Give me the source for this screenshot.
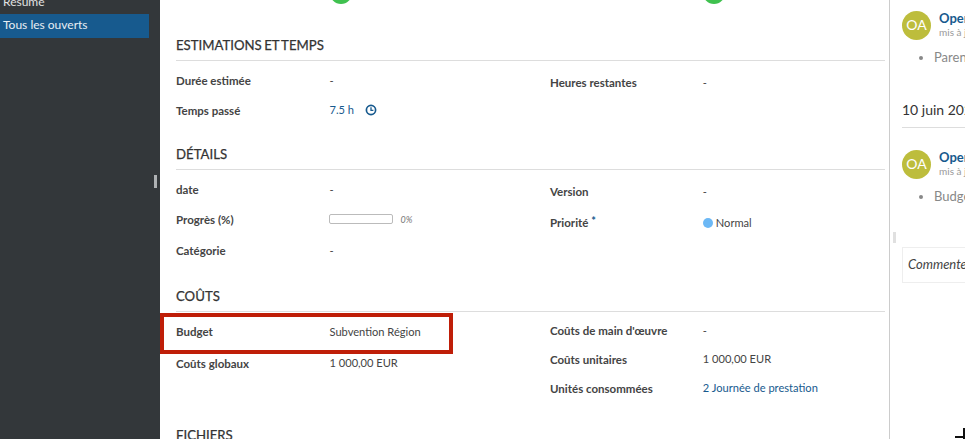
<div class="page">
  <aside class="sidebar">
    <div class="menu">
      <div class="item">Résumé</div>
      <div class="item active">Tous les ouverts</div>
    </div>
    <span class="grip"></span>
  </aside>

  <main class="content">
    <div class="scroll">
      <div class="dots">
        <div class="dotcell"><span class="dot"></span></div>
        <div class="dotcell"><span class="dot"></span></div>
      </div>

      <section class="sec first">
        <h2>ESTIMATIONS ET TEMPS</h2>
        <div class="cols">
          <div class="col">
            <div class="row h30"><b>Durée estimée</b><span>-</span></div>
            <div class="row h30"><b>Temps passé</b><span class="link up">7.5 h
              <svg class="clock" viewBox="0 0 12 12" width="12" height="12"><circle cx="6" cy="6" r="4.6" fill="none" stroke="#175a8e" stroke-width="1.7"/><path d="M6 3.2V6.4H8.4" fill="none" stroke="#175a8e" stroke-width="1.3"/></svg>
            </span></div>
          </div>
          <div class="col offset">
            <div class="row h30"><b>Heures restantes</b><span>-</span></div>
          </div>
        </div>
      </section>

      <section class="sec m18">
        <h2>DÉTAILS</h2>
        <div class="cols">
          <div class="col">
            <div class="row h30"><b>date</b><span>-</span></div>
            <div class="row h30"><b>Progrès (%)</b><span class="prog"><span class="bar"></span><i>0%</i></span></div>
            <div class="row h30 last-row"><b>Catégorie</b><span>-</span></div>
          </div>
          <div class="col offset">
            <div class="row h30"><b>Version</b><span>-</span></div>
            <div class="row h30"><b>Priorité <em>*</em></b><span class="prio"><span class="pdot"></span>Normal</span></div>
          </div>
        </div>
      </section>

      <section class="sec m20">
        <h2>COÛTS</h2>
        <div class="cols">
          <div class="col">
            <div class="row h30 budget"><b>Budget</b><span>Subvention Région</span><span class="mark"></span></div>
            <div class="row h30"><b>Coûts globaux</b><span class="up">1 000,00 EUR</span></div>
          </div>
          <div class="col">
            <div class="row h29"><b>Coûts de main d'œuvre</b><span>-</span></div>
            <div class="row h29"><b>Coûts unitaires</b><span class="up">1 000,00 EUR</span></div>
            <div class="row h29"><b>Unités consommées</b><span class="link up">2 Journée de prestation</span></div>
          </div>
        </div>
      </section>

      <section class="sec m21">
        <h2>FICHIERS</h2>
      </section>
    </div>
  </main>

  <aside class="activity">
    <div class="entry e1">
      <div class="head">
        <span class="avatar">OA</span>
        <div class="who"><a>OpenProject Admin</a><small>mis à jour le 10 juin</small></div>
      </div>
      <ul><li>Parent défini</li></ul>
    </div>
    <div class="date">10 juin 2020</div>
    <div class="entry">
      <div class="head">
        <span class="avatar">OA</span>
        <div class="who"><a>OpenProject Admin</a><small>mis à jour le 10 juin</small></div>
      </div>
      <ul><li>Budget défini</li></ul>
    </div>
    <span class="grip2"></span>
    <div class="comment">Commenter</div>
    <svg class="cursor" width="10" height="11" viewBox="0 0 10 11"><path d="M0 9H9M9 0V11" stroke="#111" stroke-width="2" fill="none"/></svg>
  </aside>
</div>

<style>
  :global(body) { margin: 0; background: #fff; }
  .page {
    display: flex;
    width: 965px;
    height: 439px;
    overflow: hidden;
    font-family: Lato, "Liberation Sans", sans-serif;
    font-size: 12px;
    color: #444;
    position: relative;
  }
  .sidebar {
    flex: 0 0 160px;
    background: #33373a;
    position: relative;
  }
  .menu { margin-top: -9px; width: 149px; }
  .item {
    height: 23px;
    line-height: 21px;
    padding-left: 3px;
    color: #fff;
    font-size: 12px;
    opacity: .85;
  }
  .item.active {
    height: 24px;
    line-height: 22px;
    background: #175a8e;
    opacity: 1;
    color: #e8eef3;
  }
  .grip {
    position: absolute;
    left: 154px;
    top: 175px;
    width: 3px;
    height: 13px;
    background: #aeb1b3;
  }
  .content {
    flex: 0 0 729px;
    border-right: 1px solid #ccc;
    overflow: hidden;
  }
  .scroll { padding: 0 4px 0 16px; margin-top: -13px; }
  .dots { display: flex; height: 17px; padding-left: 150px; }
  .dotcell { flex: 0 0 373px; }
  .dot { display: block; width: 22px; height: 17px; border-radius: 0 0 11px 11px; background: #3fc14f; margin-left: 4px; }
  .sec.first { margin-top: 30px; }
  .sec.m18 { margin-top: 18px; }
  .sec.m20 { margin-top: 20px; }
  .sec.m21 { margin-top: 21px; }
  h2 {
    margin: 0;
    font-size: 13.2px;
    font-weight: 400;
    word-spacing: -1px;
    color: #333;
    height: 26px;
    line-height: 23px;
    border-bottom: 1px solid #ddd;
    -webkit-text-stroke: .25px #333;
  }
  .cols { display: flex; padding-top: 4px; }
  .col { flex: 0 0 374px; }
  .col:last-child { flex: 0 0 335px; }
  .offset { padding-top: 2px; }
  .row { display: flex; align-items: center; position: relative; }
  .h30 { height: 30px; }
  .h29 { height: 29px; }
  .last-row { margin-top: 1px; }
  .budget { margin-bottom: 2px; }
  .row b { flex: 0 0 153.5px; font-weight: 700; font-size: 11.5px; color: #444; }
  .col:last-child .row b { flex-basis: 152.8px; }
  .row span { color: #444; font-size: 11.1px; }
  .row .up { margin-top: -2px; }
  .row .link { color: #175a8e; }
  .clock { margin-left: 8px; vertical-align: -2px; }
  em { color: #175a8e; font-style: normal; font-size: 11px; vertical-align: 2px; }
  .prog { display: flex; align-items: center; gap: 8px; margin-left: -1px; }
  .bar { display: block; width: 62px; height: 8px; border: 1px solid #bbb; border-radius: 2px; }
  .prog i { font-size: 9px; color: #777; }
  .row .prio { display: flex; align-items: center; gap: 3px; margin-top: 3px; }
  .pdot { display: block; width: 10px; height: 10px; border-radius: 50%; background: #6cb8f5; }
  .mark {
    position: absolute;
    left: -16px;
    top: -3px;
    width: 293px;
    height: 41px;
    box-sizing: border-box;
    border: 4px solid #bf1e08;
  }
  .activity {
    flex: 1;
    position: relative;
    padding: 0 0 0 12px;
    overflow: hidden;
    white-space: nowrap;
  }
  .e1 { margin-top: 11px; }
  .head { display: flex; gap: 8px; }
  .avatar {
    flex: 0 0 29px;
    height: 29px;
    border-radius: 50%;
    background: #bdbd3c;
    color: #fff;
    font-size: 14px;
    line-height: 28px;
    text-align: center;
  }
  .who a { display: block; color: #175a8e; font-weight: 700; font-size: 13px; line-height: 14px; }
  .who small { display: block; color: #999; font-size: 10px; line-height: 12px; margin-top: 1px; }
  ul { margin: 0; padding: 0 0 0 32px; color: #888; font-size: 13px; }
  ul li { margin-top: 9px; line-height: 16px; }
  .date {
    margin-top: 35px;
    padding-bottom: 7px;
    border-bottom: 1px solid #ddd;
    font-size: 14px;
    color: #333;
    line-height: 20px;
    margin-bottom: 22px;
  }
  .grip2 {
    position: absolute;
    left: 3px;
    top: 232px;
    width: 3px;
    height: 11px;
    background: #e0e0e0;
  }
  .comment {
    position: absolute;
    left: 12px;
    top: 247px;
    width: 100px;
    height: 36px;
    box-sizing: border-box;
    border: 1px solid #eee;
    padding-left: 5px;
    line-height: 33px;
    font-style: italic;
    font-size: 13px;
    color: #444;
  }
  .cursor { position: absolute; left: 65px; top: 428px; }
</style>
